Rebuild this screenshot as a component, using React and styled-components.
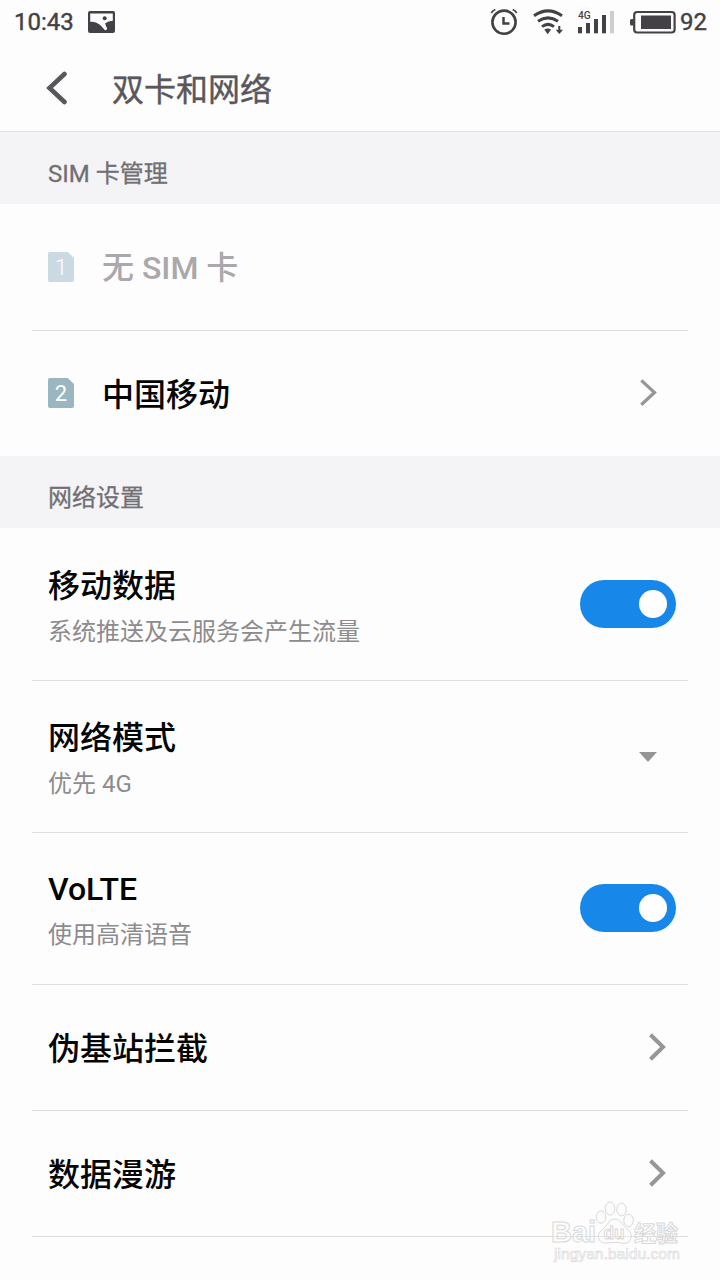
import React from "react";
import styled, { createGlobalStyle } from "styled-components";

const Global = createGlobalStyle`
  * { box-sizing: border-box; }
  body { margin: 0; background: #fdfdfd; font-family: Roboto, "Noto Sans CJK SC", sans-serif; }
  svg { display: block; flex: none; }
`;

const Screen = styled.div`
  position: relative;
  width: 720px;
  height: 1280px;
  overflow: hidden;
  background: #fdfdfd;
`;

const StatusBar = styled.header`
  display: flex;
  align-items: center;
  height: 44px;
  padding: 0 13px 0 14px;
  font-size: 24px;
  line-height: 44px;
  color: #434145;
`;

const Clock = styled.span`
  width: 74px;
  -webkit-text-stroke: 0.4px #434145;
`;

const BatteryLevel = styled.span`
  margin-left: 4px;
  -webkit-text-stroke: 0.4px #434145;
`;

const StatusIcons = styled.div`
  display: flex;
  align-items: center;
  margin-left: auto;
`;

const RadioIcons = styled.div`
  display: flex;
  align-items: center;
  gap: 15px;
  margin-right: 16px;
`;

const TitleBar = styled.div`
  display: flex;
  align-items: center;
  height: 88px;
  padding-left: 46px;
  border-bottom: 1px solid #e0dfe1;
`;

const Title = styled.h1`
  margin: 4px 0 0 44px;
  font-size: 32px;
  line-height: 48px;
  font-weight: 400;
  color: #59575b;
  -webkit-text-stroke: 0.4px #59575b;
`;

const SectionHeader = styled.h2`
  display: flex;
  align-items: center;
  height: 72px;
  margin: 0;
  padding: 12px 48px 0;
  background: #f4f3f6;
  font-size: 24px;
  line-height: 36px;
  font-weight: 400;
  color: #706f73;
  -webkit-text-stroke: 0.3px #706f73;
`;

const List = styled.div`
  padding: 0 32px;
`;

const Row = styled.div`
  display: flex;
  align-items: center;
  height: ${(p) => (p.$tall ? 152 : 126)}px;
  padding: 0 ${(p) => p.$end ?? 22}px 0 16px;
  & + & { box-shadow: inset 0 1px #dedee0; }
`;

const Texts = styled.div`
  flex: 1;
  padding-top: ${(p) => (p.$latin ? 2 : 3)}px;
  margin-left: ${(p) => p.$indent ?? 0}px;
`;

const Label = styled.div`
  font-size: 32px;
  line-height: 48px;
  font-weight: 500;
  color: ${(p) => (p.$muted ? "#aaa8ab" : "#050505")};
`;

const Hint = styled.div`
  margin-top: 4px;
  font-size: 24px;
  line-height: 36px;
  color: #8c8b8e;
`;

const Toggle = styled.div`
  display: flex;
  align-items: center;
  justify-content: flex-end;
  width: 96px;
  height: 48px;
  padding-right: 9px;
  border-radius: 24px;
  background: #1788e9;
`;

const Knob = styled.span`
  width: 28px;
  height: 28px;
  border-radius: 50%;
  background: #fff;
`;

const SimBadge = styled.span`
  width: 26px;
  height: 30px;
  border-radius: 2px;
  clip-path: polygon(0 0, 76% 0, 100% 20%, 100% 100%, 0 100%);
  background: ${(p) => (p.$muted ? "#cbdae2" : "#9ab7c1")};
  color: #fff;
  font-size: 22px;
  line-height: 31px;
  font-weight: ${(p) => (p.$muted ? 300 : 400)};
  text-align: center;
`;

const Watermark = styled.div`
  position: absolute;
  left: 544px;
  top: 1200px;
`;

const PictureIcon = () => (
  <svg width="28" height="22" viewBox="0 0 28 22">
    <rect x="0" y="0" width="27" height="22" rx="2" fill="#434145" />
    <path d="M2.200 2.500H24.800V9.800Q20 10 17 12.600L19.200 17.800Q18.500 19.500 17 19.200L13 14.800Q8 10.200 2.200 10.800z" fill="#fdfdfd" />
    <circle cx="16.700" cy="7.300" r="2" fill="#434145" />
  </svg>
);

const AlarmIcon = () => (
  <svg width="28" height="28" viewBox="0 0 28 28" fill="none" stroke="#434145">
    <circle cx="14" cy="14.200" r="11.600" strokeWidth="2.600" />
    <path d="M13.500 9v6.500h6" strokeWidth="2.500" />
    <path d="M1.300 5Q2.500 2.700 5.300 1.500M22.700 1.500Q25.500 2.700 26.700 5" strokeWidth="1.800" />
  </svg>
);

const WifiIcon = () => (
  <svg width="30" height="28" viewBox="0 0 30 28" fill="none" stroke="#434145">
    <path d="M1 7.800Q15-2 29 7.800M5 13.300Q15 6.500 25 13.300M9 18.600Q15 14.200 21 18.600" strokeWidth="3" />
    <path d="M11.300 21.600q3.400-2.400 6.800 0l-3.400 4.600z" fill="#434145" stroke="none" />
    <path d="M26.300 18v5" strokeWidth="2" />
    <path d="M22.700 21.700H30L26.300 26z" fill="#434145" stroke="none" />
  </svg>
);

const SignalIcon = () => (
  <svg width="36" height="26" viewBox="0 0 36 26" fill="#434145">
    <text x="0" y="9.500" fontSize="10.200" fontFamily="Roboto, sans-serif" fontWeight="500">4G</text>
    <rect x="0" y="18" width="4" height="6.300" />
    <rect x="8" y="14" width="4" height="10.300" />
    <rect x="16" y="10" width="4" height="14.300" />
    <rect x="24" y="6" width="4" height="18.300" />
    <rect x="32" y="2" width="4" height="22.300" fill="#cfcdd0" />
  </svg>
);

const BatteryIcon = () => (
  <svg width="46" height="24" viewBox="0 0 46 24">
    <rect x="4.200" y="2" width="40.400" height="20.500" rx="3" fill="none" stroke="#434145" strokeWidth="2.200" />
    <path d="M3.500 9H1.500Q0 9 0 10.500v3.500q0 1.500 1.500 1.500h2z" fill="#434145" />
    <rect x="11" y="5.500" width="30" height="13.500" fill="#434145" />
  </svg>
);

const BackIcon = () => (
  <svg width="22" height="34" viewBox="0 0 22 34" fill="none" stroke="#59575b" strokeWidth="4.600" strokeLinecap="round">
    <path d="M18.500 3L3.500 17 18.500 31" />
  </svg>
);

const Chevron = ({ thin }) => (
  <svg width="18" height="28" viewBox="0 0 18 28" fill="none" stroke="#969597" strokeWidth={thin ? 3.2 : 4}>
    <path d={thin ? "M1.300 1.300L14.500 13.500 1.300 25.700" : "M2.500 1.800L15 14 2.500 26.200"} />
  </svg>
);

const DropArrow = () => (
  <svg width="18" height="12" viewBox="0 0 18 12">
    <path d="M0 2h18L9 12z" fill="#959496" />
  </svg>
);

const WatermarkArt = () => (
  <svg width="150" height="76" viewBox="-8 0 150 76" fill="#fdfdfd" fillOpacity="0.3" stroke="#d9d9da" strokeWidth="1">
    <ellipse cx="49" cy="17" rx="4.800" ry="6.200" />
    <ellipse cx="58" cy="8.500" rx="4.800" ry="6.500" />
    <ellipse cx="69.500" cy="9.500" rx="4.800" ry="6.300" />
    <ellipse cx="76.500" cy="20.500" rx="4.800" ry="6.200" />
    <text x="-1" y="42" fontSize="29" fontWeight="700" fontFamily="Liberation Sans, sans-serif" textLength="45" lengthAdjust="spacingAndGlyphs">Bai</text>
    <path d="M62.500 19c6 0 7 5 11 8.500s6.500 6 5.500 10.500-4 6-9 5-9-.500-14 0-9-1.500-9.500-5.500 2-6.500 6-10 4.500-8.500 10-8.500z" />
    <text x="51.500" y="38.500" fontSize="19" fontWeight="700" fontFamily="Liberation Sans, sans-serif" textLength="21" lengthAdjust="spacingAndGlyphs">du</text>
    <text x="82" y="40.500" fontSize="22" fontWeight="700" fontFamily="Noto Sans CJK SC, sans-serif">经验</text>
    <text x="2" y="59" fontSize="15" fontFamily="Liberation Sans, sans-serif" textLength="126" lengthAdjust="spacingAndGlyphs" strokeWidth="0.600">jingyan.baidu.com</text>
  </svg>
);

export default function App() {
  return (
    <Screen>
      <Global />
      <StatusBar>
        <Clock>10:43</Clock>
        <PictureIcon />
        <StatusIcons>
          <RadioIcons>
            <AlarmIcon />
            <WifiIcon />
            <SignalIcon />
          </RadioIcons>
          <BatteryIcon />
          <BatteryLevel>92</BatteryLevel>
        </StatusIcons>
      </StatusBar>
      <TitleBar>
        <BackIcon />
        <Title>双卡和网络</Title>
      </TitleBar>
      <SectionHeader>SIM 卡管理</SectionHeader>
      <List>
        <Row>
          <SimBadge $muted>1</SimBadge>
          <Texts $latin $indent={28}><Label $muted>无 SIM 卡</Label></Texts>
        </Row>
        <Row $end={30}>
          <SimBadge>2</SimBadge>
          <Texts $indent={28}><Label>中国移动</Label></Texts>
          <Chevron thin />
        </Row>
      </List>
      <SectionHeader>网络设置</SectionHeader>
      <List>
        <Row $tall $end={12}>
          <Texts><Label>移动数据</Label><Hint>系统推送及云服务会产生流量</Hint></Texts>
          <Toggle><Knob /></Toggle>
        </Row>
        <Row $tall $end={31}>
          <Texts><Label>网络模式</Label><Hint>优先 4G</Hint></Texts>
          <DropArrow />
        </Row>
        <Row $tall $end={12}>
          <Texts $latin><Label>VoLTE</Label><Hint>使用高清语音</Hint></Texts>
          <Toggle><Knob /></Toggle>
        </Row>
        <Row>
          <Texts><Label>伪基站拦截</Label></Texts>
          <Chevron />
        </Row>
        <Row>
          <Texts><Label>数据漫游</Label></Texts>
          <Chevron />
        </Row>
        <Row />
      </List>
      <Watermark><WatermarkArt /></Watermark>
    </Screen>
  );
}
